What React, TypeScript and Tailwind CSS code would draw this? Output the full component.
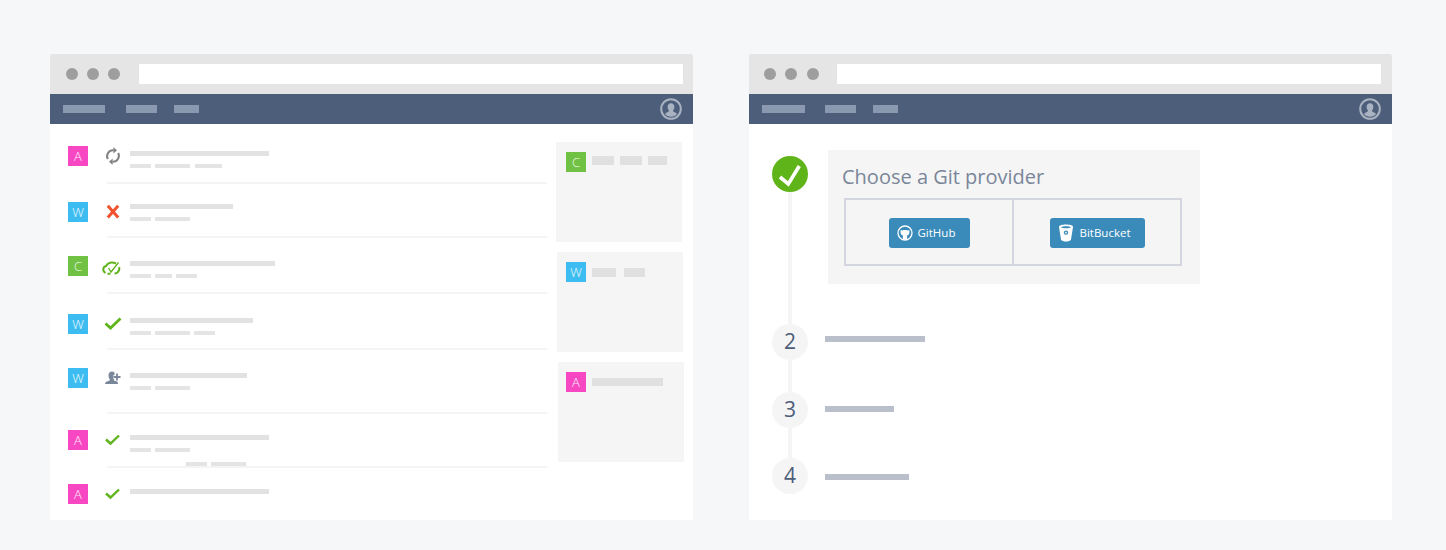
import React from 'react';

const FONT = "font-['Open_Sans',sans-serif]";

type Letter = 'A' | 'W' | 'C';

const badgeColors: Record<Letter, string> = {
  A: 'bg-[#f847c3]',
  W: 'bg-[#3dbcf1]',
  C: 'bg-[#70c144]',
};

function Badge({ letter }: { letter: Letter }) {
  return (
    <div
      className={`flex h-5 w-5 shrink-0 items-center justify-center text-[13px] font-light leading-none text-white/90 ${FONT} ${badgeColors[letter]}`}
    >
      {letter}
    </div>
  );
}

function IconBox({ children }: { children: React.ReactNode }) {
  return (
    <svg className="ml-[13px] mr-[5px] h-5 w-6 shrink-0 overflow-visible" viewBox="0 0 24 20" fill="none">
      {children}
    </svg>
  );
}

const SyncIcon = () => (
  <IconBox>
    <path d="M6.8 13A6 6 0 0 1 12.5 4.2" stroke="#808080" strokeWidth="2" />
    <path d="M12.4 1.2L16 4.3L12.4 7.4Z" fill="#808080" />
    <path d="M17.2 7A6 6 0 0 1 11.5 15.8" stroke="#808080" strokeWidth="2" />
    <path d="M11.6 12.6L8 15.7L11.6 18.8Z" fill="#808080" />
  </IconBox>
);

const CrossIcon = () => (
  <IconBox>
    <path d="M6.8 3.8L17.2 15.6M17.2 3.8L6.8 15.6" stroke="#f0532d" strokeWidth="3" />
  </IconBox>
);

const CloudCheckIcon = () => (
  <IconBox>
    <path d="M4.5 17C1 15 2 10.5 5 10C6.5 6.5 11 5.5 15 7.5" stroke="#5fb41a" strokeWidth="2" />
    <path d="M6.5 17.8H9.5M18.2 11C19 14.5 16.5 17.6 13.5 17.6" stroke="#5fb41a" strokeWidth="2" />
    <path d="M7.5 12L10 16L17.5 6.5" stroke="#5fb41a" strokeWidth="1.3" />
  </IconBox>
);

const CheckBig = () => (
  <IconBox>
    <path d="M4.5 9.5L9.5 14L19.5 4.5" stroke="#5fb41a" strokeWidth="2.8" />
  </IconBox>
);

const CheckSmall = () => (
  <IconBox>
    <path d="M5 9.5L9.5 13.5L18 5.5" stroke="#5fb41a" strokeWidth="2.4" />
  </IconBox>
);

const UserPlusIcon = () => (
  <IconBox>
    <path
      d="M7.5 7.5C7.5 5 9 3.6 11 3.6C12.6 3.6 13.5 4.4 13.5 5.2L13.5 10.5C12.8 11.5 12.6 12 13 12.5L16 13.5C16.7 14 17 15 17 16L4 16C4 14.5 5 13.8 6 13.4L8.6 12.4C9 12 8.8 11.4 8.3 10.6C7.8 9.8 7.5 8.8 7.5 7.5Z"
      fill="#7a8699"
    />
    <path d="M16 5V13M12.2 9H19.8" stroke="#ffffff" strokeWidth="3.6" />
    <path d="M16 5.5V12.5M12.5 9H19.5" stroke="#7a8699" strokeWidth="1.8" />
  </IconBox>
);

type Row = {
  letter: Letter;
  icon: React.ReactNode;
  box: string;
  offset: string;
  first: string;
  pieces: string[];
  extra?: boolean;
  last?: boolean;
};

const rows: Row[] = [
  {
    letter: 'A',
    icon: <SyncIcon />,
    box: 'h-[60px] pt-[22px]',
    offset: 'pt-[5px]',
    first: 'w-[139px]',
    pieces: ['w-[21px]', 'w-[35px] ml-1', 'w-[27px] ml-[5px]'],
  },
  {
    letter: 'W',
    icon: <CrossIcon />,
    box: 'h-[54px] pt-[18px]',
    offset: 'pt-[2px]',
    first: 'w-[103px]',
    pieces: ['w-[21px]', 'w-[35px] ml-1'],
  },
  {
    letter: 'C',
    icon: <CloudCheckIcon />,
    box: 'h-[56px] pt-[18px]',
    offset: 'pt-[5px]',
    first: 'w-[145px]',
    pieces: ['w-[21px]', 'w-[17px] ml-1', 'w-[21px] ml-1'],
  },
  {
    letter: 'W',
    icon: <CheckBig />,
    box: 'h-[56px] pt-[20px]',
    offset: 'pt-[4px]',
    first: 'w-[123px]',
    pieces: ['w-[21px]', 'w-[35px] ml-1', 'w-[21px] ml-1'],
  },
  {
    letter: 'W',
    icon: <UserPlusIcon />,
    box: 'h-[64px] pt-[18px]',
    offset: 'pt-[5px]',
    first: 'w-[117px]',
    pieces: ['w-[21px]', 'w-[35px] ml-1'],
  },
  {
    letter: 'A',
    icon: <CheckSmall />,
    box: 'h-[54px] pt-[16px]',
    offset: 'pt-[5px]',
    first: 'w-[139px]',
    pieces: ['w-[21px]', 'w-[35px] ml-1'],
    extra: true,
  },
  {
    letter: 'A',
    icon: <CheckSmall />,
    box: 'h-[52px] pt-[16px]',
    offset: 'pt-[5px]',
    first: 'w-[139px]',
    pieces: [],
    last: true,
  },
];

function FeedRow({ row }: { row: Row }) {
  return (
    <div className={`relative pl-[18px] ${row.box}`}>
      <div className="flex">
        <Badge letter={row.letter} />
        {row.icon}
        <div className={row.offset}>
          <div className={`h-[5px] bg-[#e2e2e2] ${row.first}`} />
          {row.pieces.length > 0 && (
            <div className="mt-2 flex">
              {row.pieces.map((p, i) => (
                <div key={i} className={`h-1 bg-[#e4e4e4] ${p}`} />
              ))}
            </div>
          )}
          {row.extra && (
            <div className="ml-[56px] mt-[10px] flex">
              <div className="h-1 w-[21px] bg-[#e4e4e4]" />
              <div className="ml-1 h-1 w-[35px] bg-[#e4e4e4]" />
            </div>
          )}
        </div>
      </div>
      {!row.last && <div className="absolute bottom-0 left-[57px] right-0 h-[2px] bg-[#f4f4f4]" />}
    </div>
  );
}

function SideCard({
  letter,
  shift,
  bars,
  barBox,
}: {
  letter: Letter;
  shift: string;
  bars: string[];
  barBox: string;
}) {
  return (
    <div className={`flex h-[100px] w-[126px] bg-[#f5f5f5] pt-[10px] ${shift}`}>
      <Badge letter={letter} />
      <div className={`ml-[6px] flex ${barBox}`}>
        {bars.map((b, i) => (
          <div key={i} className={`bg-[#e0e0e0] ${b}`} />
        ))}
      </div>
    </div>
  );
}

function BrowserFrame({
  dots,
  url,
  navFirst,
  navGap,
  children,
}: {
  dots: string[];
  url: string;
  navFirst: string;
  navGap: string;
  children: React.ReactNode;
}) {
  return (
    <div className="flex h-[466px] w-[643px] shrink-0 flex-col overflow-hidden rounded-t-[2px] bg-white">
      <div className="flex h-10 shrink-0 items-center bg-[#e5e5e5]">
        {dots.map((d, i) => (
          <div key={i} className={`h-3 w-3 rounded-full bg-[#9e9e9e] ${d}`} />
        ))}
        <div className={`h-5 w-[544px] bg-white ${url}`} />
      </div>
      <div className="flex h-[30px] shrink-0 items-center justify-between bg-[#4d5e7a] pl-[13px] pr-[11px]">
        <div className="flex items-center">
          <div className={`h-2 bg-[#8a98b0] ${navFirst}`} />
          <div className={`h-2 w-[31px] bg-[#8a98b0] ${navGap}`} />
          <div className="ml-[17px] h-2 w-[25px] bg-[#8a98b0]" />
        </div>
        <svg className="h-[22px] w-[22px]" viewBox="0 0 22 22" fill="none">
          <circle cx="11" cy="11" r="9.8" stroke="#a9b2c0" strokeWidth="2" />
          <path
            d="M7.6 9C7.6 6.8 9 5.3 11 5.3C13 5.3 14.4 6.8 14.4 9C14.4 10.6 13.8 11.6 13 12.6C13 13.4 13.4 13.8 14.6 14.2C15.8 14.6 16.6 15.2 17 16C15.6 17.8 13.4 18.8 11 18.8C8.6 18.8 6.4 17.8 5 16C5.4 15.2 6.2 14.6 7.4 14.2C8.6 13.8 9 13.4 9 12.6C8.2 11.6 7.6 10.6 7.6 9Z"
            fill="#a9b2c0"
          />
        </svg>
      </div>
      {children}
    </div>
  );
}

function GitProviderButton({
  width,
  icon,
  label,
  textGap,
}: {
  width: string;
  icon: React.ReactNode;
  label: string;
  textGap: string;
}) {
  return (
    <div
      className={`mt-[2px] flex h-[30px] items-center rounded-[3px] bg-[#3a8bba] text-[11.5px] font-medium leading-none text-white ${FONT} ${width}`}
    >
      {icon}
      <span className={textGap}>{label}</span>
    </div>
  );
}

function StepDot({ n }: { n: number }) {
  return (
    <div
      className={`flex h-9 w-9 shrink-0 items-center justify-center rounded-full bg-[#f5f5f5] pb-[2px] text-[21px] leading-none text-[#4d5e7a] ${FONT}`}
    >
      {n}
    </div>
  );
}

export default function App() {
  return (
    <div className="flex h-[550px] w-[1446px] gap-14 overflow-hidden bg-[#f6f7f9] pl-[50px] pt-[54px]">
      <BrowserFrame
        dots={['ml-4', 'ml-[9px]', 'ml-[9px]']}
        url="ml-[19px]"
        navFirst="w-[42px]"
        navGap="ml-[21px]"
      >
        <div className="flex">
          <div className="w-[497px] shrink-0">
            {rows.map((row, i) => (
              <FeedRow key={i} row={row} />
            ))}
          </div>
          <div className="flex flex-col gap-[10px] pl-[9px] pt-[18px]">
            <SideCard
              letter="C"
              shift="pl-[10px]"
              barBox="mt-1 h-[9px]"
              bars={['w-[22px]', 'ml-[6px] w-[22px]', 'ml-[6px] w-[19px]']}
            />
            <SideCard
              letter="W"
              shift="ml-px pl-[9px]"
              barBox="mt-[6px] h-[9px]"
              bars={['w-6', 'ml-2 w-[21px]']}
            />
            <SideCard
              letter="A"
              shift="ml-[2px] pl-2"
              barBox="mt-[6px] h-2"
              bars={['w-[71px]']}
            />
          </div>
        </div>
      </BrowserFrame>

      <BrowserFrame
        dots={['ml-[15px]', 'ml-[9px]', 'ml-[10px]']}
        url="ml-[18px]"
        navFirst="w-[43px]"
        navGap="ml-5"
      >
        <div className="flex">
          <div className="ml-[23px] flex w-9 shrink-0 flex-col items-center pt-8">
            <div className="flex h-9 w-9 shrink-0 items-center justify-center rounded-full bg-[#5fb41a]">
              <svg className="h-9 w-9" viewBox="0 0 36 36" fill="none">
                <path d="M8 21L16.3 28L27.3 10" stroke="#ffffff" strokeWidth="3.6" />
              </svg>
            </div>
            <div className="h-[132px] w-1 bg-[#f5f5f5]" />
            <StepDot n={2} />
            <div className="h-8 w-1 bg-[#f5f5f5]" />
            <StepDot n={3} />
            <div className="h-[30px] w-1 bg-[#f5f5f5]" />
            <StepDot n={4} />
          </div>

          <div className="ml-[17px] pt-[26px]">
            <div className="ml-[3px] h-[134px] w-[372px] bg-[#f5f5f5] pt-[13px]">
              <div className={`h-7 pl-[14px] text-[20px] leading-7 text-[#7a8699] ${FONT}`}>
                Choose a Git provider
              </div>
              <div className="ml-4 mt-[7px] flex h-[68px] w-[338px] border-2 border-[#d3d6df]">
                <div className="flex w-[168px] items-center justify-center border-r-2 border-[#d3d6df]">
                  <GitProviderButton
                    width="w-[81px] pl-2"
                    label="GitHub"
                    textGap="ml-[5px]"
                    icon={
                      <svg className="h-4 w-4" viewBox="0 0 16 16" fill="none">
                        <circle cx="8" cy="8" r="7" stroke="#ffffff" strokeWidth="1.3" />
                        <path
                          d="M3.8 5L5.3 5.4C6.8 4.8 9.2 4.8 10.7 5.4L12.2 5C12.6 6 12.5 6.8 12.4 7.2C12.6 9.2 11.4 10.2 9.8 10.5C10.2 11 10.2 11.6 10.2 14.8H5.8C5.8 11.6 5.8 11 6.2 10.5C4.6 10.2 3.4 9.2 3.6 7.2C3.5 6.8 3.4 6 3.8 5Z"
                          fill="#ffffff"
                        />
                      </svg>
                    }
                  />
                </div>
                <div className="flex flex-1 items-center justify-center">
                  <GitProviderButton
                    width="w-[95px] pl-2"
                    label="BitBucket"
                    textGap="ml-[6px]"
                    icon={
                      <svg className="h-[18px] w-4" viewBox="0 0 16 18" fill="none">
                        <path
                          d="M1 3C1 1.4 4.4 0.6 8 0.6C11.6 0.6 15 1.4 15 3L13 15.5C12.4 17 10 17.6 8 17.6C6 17.6 3.6 17 3 15.5Z"
                          fill="#ffffff"
                        />
                        <path d="M3 3.2C4 2.6 6 2.3 8 2.3C10 2.3 12 2.6 13 3.2C12 3.9 10 4.2 8 4.2C6 4.2 4 3.9 3 3.2Z" fill="#3a8bba" />
                        <path d="M2.4 6C4.5 7.4 11.5 7.4 13.6 6L13 9.8C11 11 5 11 3 9.8Z" fill="#ffffff" />
                        <circle cx="8" cy="8.6" r="2.2" fill="#3a8bba" />
                        <circle cx="8" cy="8.6" r="0.9" fill="#ffffff" />
                      </svg>
                    }
                  />
                </div>
              </div>
            </div>
            <div className="mt-[52px] h-[6px] w-[100px] bg-[#b9c0cc]" />
            <div className="mt-16 h-[6px] w-[69px] bg-[#b9c0cc]" />
            <div className="mt-[62px] h-[6px] w-[84px] bg-[#b9c0cc]" />
          </div>
        </div>
      </BrowserFrame>
    </div>
  );
}
